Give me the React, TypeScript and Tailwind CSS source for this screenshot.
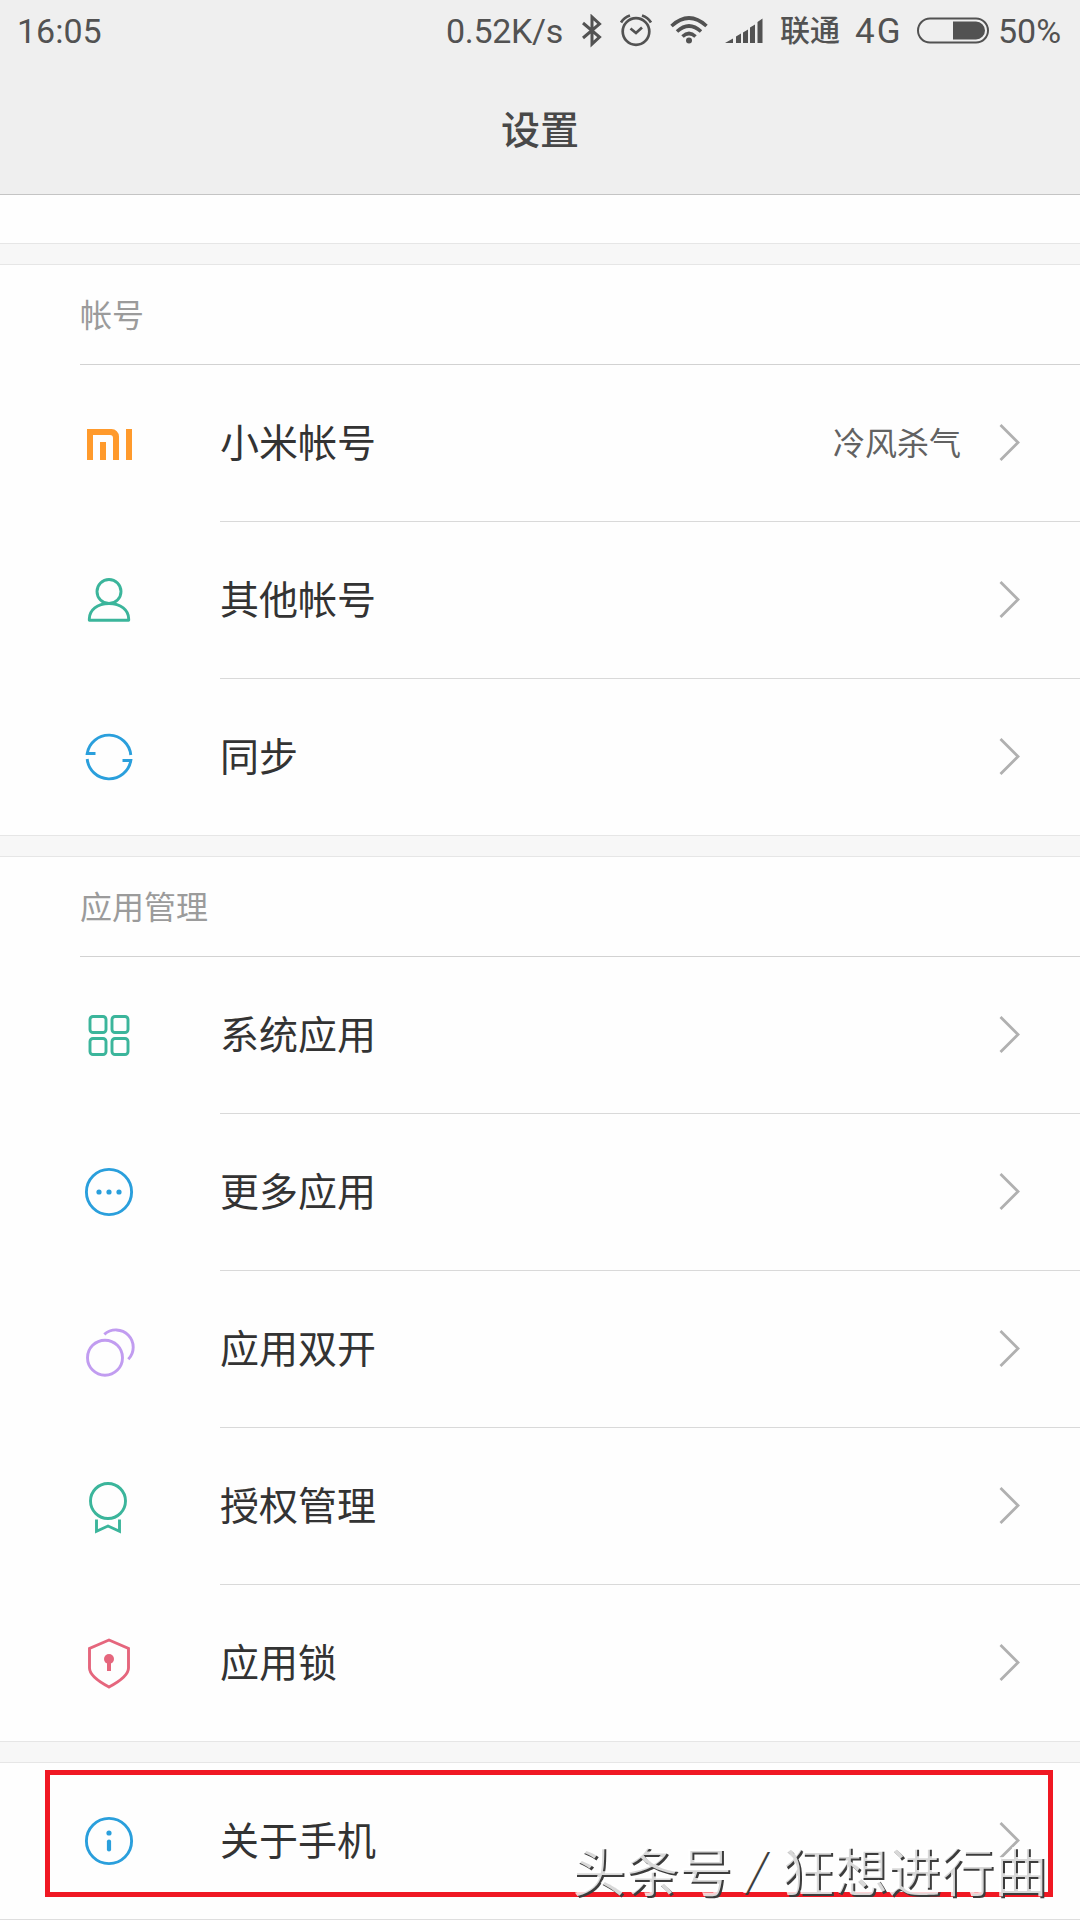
import React from "react";

const TEAL = "#3bb59b";
const BLUE = "#2a9fdc";

type RowData = { icon: React.ReactNode; label: string; value?: string };

function Icon({ children, color }: { children: React.ReactNode; color: string }) {
  return (
    <svg width="60" height="60" viewBox="0 0 60 60" fill="none" stroke={color} strokeWidth="2.9">
      {children}
    </svg>
  );
}

const MiIcon = (
  <Icon color="none">
    <g fill="#ff9a2c">
      <path d="M8 16h24.500a7.500 7.500 0 0 1 7.500 7.500V47h-6V25a3 3 0 0 0-3-3H14v25H8z" />
      <path d="M21 29h6v18h-6zM47 16h6v31h-6z" />
    </g>
  </Icon>
);
const UserIcon = (
  <Icon color={TEAL}>
    <circle cx="30" cy="21.500" r="12" />
    <path d="M10.300 50.200v-1.200c0-9 8-15.500 19.700-15.500s19.700 6.500 19.700 15.500v1.200z" strokeLinejoin="round" />
  </Icon>
);
const SyncIcon = (
  <Icon color={BLUE}>
    <path d="M16.500 26.500H8.200A22 22 0 0 1 51.800 28" />
    <path d="M43.500 33.500H51.800A22 22 0 0 1 8.200 32" />
  </Icon>
);
const GridIcon = (
  <Icon color={TEAL}>
    <rect x="11" y="11.500" width="16" height="16" rx="3" />
    <rect x="33" y="11.500" width="16" height="16" rx="3" />
    <rect x="11" y="33.500" width="16" height="16" rx="3" />
    <rect x="33" y="33.500" width="16" height="16" rx="3" />
  </Icon>
);
const MoreIcon = (
  <Icon color={BLUE}>
    <circle cx="30" cy="30" r="22.600" />
    <g fill={BLUE} stroke="none">
      <circle cx="20" cy="30" r="2.600" />
      <circle cx="30" cy="30" r="2.600" />
      <circle cx="40" cy="30" r="2.600" />
    </g>
  </Icon>
);
const DualIcon = (
  <Icon color="#c19cf0">
    <circle cx="26" cy="38.700" r="17.500" />
    <path d="M25.300 15.400A17.300 17.300 0 0 1 49.300 40.300" />
  </Icon>
);
const BadgeIcon = (
  <Icon color={TEAL}>
    <circle cx="29" cy="25" r="17.500" />
    <path d="M17.500 43.500v11.700L29 50l11.500 5.200V43.500" />
  </Icon>
);
const ShieldIcon = (
  <Icon color="#e5667d">
    <path d="M30 7l19.500 8.500v19.500c0 8-11 14.500-19.500 19C21.500 49.500 10.500 43 10.500 35V15.500z" />
    <circle cx="30" cy="26" r="5" fill="#e5667d" stroke="none" />
    <path d="M30 26v12" strokeWidth="4" />
  </Icon>
);
const InfoIcon = (
  <Icon color={BLUE}>
    <circle cx="30" cy="30" r="22.600" />
    <circle cx="30" cy="22" r="2.600" fill={BLUE} stroke="none" />
    <path d="M30 30.500v8" strokeWidth="4.200" strokeLinecap="round" />
  </Icon>
);

function Chevron() {
  return (
    <svg width="24" height="40" viewBox="0 0 24 40" fill="none" stroke="#b0b0b0" strokeWidth="2.800">
      <path d="M1.500 2l17.500 17.500L1.500 37" />
    </svg>
  );
}

function Row({ icon, label, value, last }: RowData & { last?: boolean }) {
  return (
    <div className={last ? "flex h-[156px]" : "flex h-[157px]"}>
      <div className="flex h-[156px] w-[220px] shrink-0 items-center pl-[79px]">{icon}</div>
      <div className={last ? "flex flex-1 items-center" : "flex flex-1 items-center border-b border-[#d9d9d9]"}>
        <span className="flex-1 pb-[5px] text-[39px] leading-none text-[#333]">{label}</span>
        {value && <span className="mr-[38px] pb-[5px] text-[32px] leading-none text-[#626262]">{value}</span>}
        <span className="mr-[57px]">
          <Chevron />
        </span>
      </div>
    </div>
  );
}

function Gap() {
  return <div className="h-[22px] border-y border-[#e6e6e6] bg-[#f7f7f7]" />;
}

function Section({ title, rows }: { title: string; rows: RowData[] }) {
  return (
    <section>
      <div className="ml-[80px] flex h-[100px] items-center border-b border-[#d2d2d2] pb-[3px] text-[32px] leading-none text-[#9b9b9b]">
        {title}
      </div>
      {rows.map((r, i) => (
        <Row key={r.label} {...r} last={i === rows.length - 1} />
      ))}
    </section>
  );
}

function StatusBar() {
  return (
    <div className="flex h-[62px] items-center whitespace-nowrap pl-[17px] font-[Roboto,'Noto_Sans_CJK_SC',sans-serif] text-[34px] leading-none text-[#525252]">
      <span className="w-[429px]">16:05</span>
      <span className="w-[117px] tracking-[-0.3px]">0.52K/s</span>
      <svg className="ml-[18px]" width="22" height="34" viewBox="0 0 22 34" fill="none" stroke="#525252" strokeWidth="3">
        <path d="M2 9l16.500 14-7.500 7V3l7.500 7L2 24" />
      </svg>
      <svg className="ml-[16px]" width="34" height="34" viewBox="0 0 34 34" fill="none" stroke="#525252" strokeWidth="2.700">
        <circle cx="17" cy="17.500" r="13.300" />
        <path d="M11.500 14.500l5.500 4.500 6-5.500M2 8.500Q5 3.500 11 1.500M32 8.500Q29 3.500 23 1.500" />
      </svg>
      <svg className="ml-[16px]" width="40" height="34" viewBox="0 0 40 34" fill="none" stroke="#525252" strokeWidth="3.600">
        <path d="M2.500 12Q20-4 37.500 12M8 17.500Q20 6.500 32 17.500M13.500 22.500Q20 16.500 26.500 22.500" />
        <circle cx="20" cy="26.500" r="3" fill="#525252" stroke="none" />
      </svg>
      <svg className="ml-[15px]" width="40" height="34" viewBox="0 0 40 34" fill="#525252">
        <path d="M1 29l8-4.500V29zM12 22.500l5-3V29h-5zM19 18.500l5-3V29h-5zM26 13.500l5-3V29h-5zM33.500 8l5-3.500V29h-5z" />
      </svg>
      <span className="ml-[16px] w-[60px] text-[30px] font-medium">联通</span>
      <span className="ml-[15px] w-[47px] text-[35px] tracking-[2px]">4G</span>
      <svg className="ml-[14px]" width="74" height="34" viewBox="0 0 74 34" fill="none">
        <rect x="2" y="4.500" width="70" height="24" rx="12" stroke="#525252" strokeWidth="2" />
        <path d="M37 7.500h23a9 9 0 0 1 0 18H37z" fill="#525252" />
      </svg>
      <span className="ml-[8px] w-[62px]">50%</span>
    </div>
  );
}

export default function App() {
  return (
    <div className="relative flex h-[1920px] w-[1080px] flex-col overflow-hidden bg-[#fefefe] font-['Noto_Sans_CJK_SC',sans-serif]">
      <header className="h-[195px] shrink-0 border-b border-[#c4c4c4] bg-[#efefef]">
        <StatusBar />
        <h1 className="flex h-[130px] items-center justify-center text-[39px] font-medium leading-none text-[#484848]">设置</h1>
      </header>
      <div className="h-[48px] shrink-0" />
      <Gap />
      <Section
        title="帐号"
        rows={[
          { icon: MiIcon, label: "小米帐号", value: "冷风杀气" },
          { icon: UserIcon, label: "其他帐号" },
          { icon: SyncIcon, label: "同步" },
        ]}
      />
      <Gap />
      <Section
        title="应用管理"
        rows={[
          { icon: GridIcon, label: "系统应用" },
          { icon: MoreIcon, label: "更多应用" },
          { icon: DualIcon, label: "应用双开" },
          { icon: BadgeIcon, label: "授权管理" },
          { icon: ShieldIcon, label: "应用锁" },
        ]}
      />
      <Gap />
      <Row icon={InfoIcon} label="关于手机" last />
      <div className="h-px shrink-0 bg-[#dedede]" />

      <div className="absolute left-[45px] top-[1770px] h-[127px] w-[1008px] border-[5px] border-[#f01823]" />
      <div className="absolute left-[572px] top-[1842px] flex whitespace-pre text-[53.300px] leading-none text-white/80 [text-shadow:2px_2px_0_#3c3c3c]">
        <span>头条号</span>
        <span className="inline-block w-[49px] -skew-x-12 pt-[2px] text-center text-[44px]">/</span>
        <span>狂想进行曲</span>
      </div>
    </div>
  );
}
